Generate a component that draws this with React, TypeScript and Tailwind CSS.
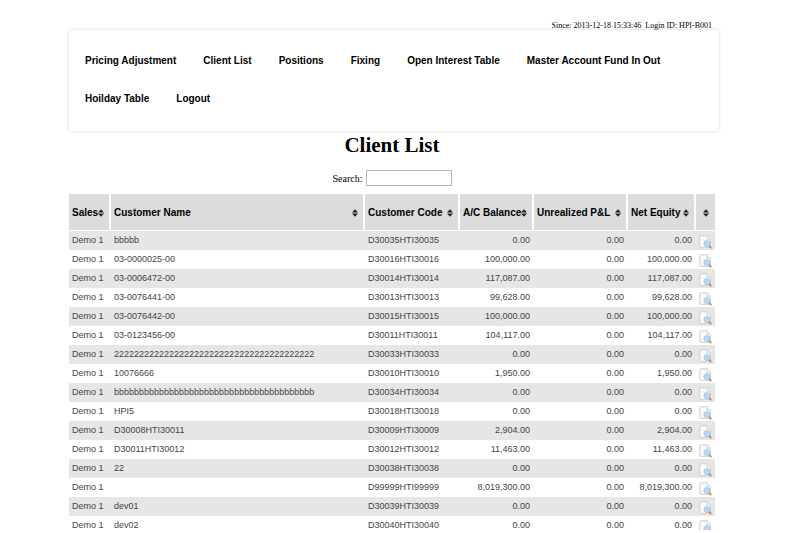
import type { ReactNode } from 'react';

interface Client {
  name: string;
  code: string;
  balance: string;
  equity: string;
}

const navItems = [
  'Pricing Adjustment',
  'Client List',
  'Positions',
  'Fixing',
  'Open Interest Table',
  'Master Account Fund In Out',
  'Hoilday Table',
  'Logout',
];

const clients: Client[] = [
  { name: 'bbbbb', code: 'D30035HTI30035', balance: '0.00', equity: '0.00' },
  { name: '03-0000025-00', code: 'D30016HTI30016', balance: '100,000.00', equity: '100,000.00' },
  { name: '03-0006472-00', code: 'D30014HTI30014', balance: '117,087.00', equity: '117,087.00' },
  { name: '03-0076441-00', code: 'D30013HTI30013', balance: '99,628.00', equity: '99,628.00' },
  { name: '03-0076442-00', code: 'D30015HTI30015', balance: '100,000.00', equity: '100,000.00' },
  { name: '03-0123456-00', code: 'D30011HTI30011', balance: '104,117.00', equity: '104,117.00' },
  { name: '2222222222222222222222222222222222222222', code: 'D30033HTI30033', balance: '0.00', equity: '0.00' },
  { name: '10076666', code: 'D30010HTI30010', balance: '1,950.00', equity: '1,950.00' },
  { name: 'bbbbbbbbbbbbbbbbbbbbbbbbbbbbbbbbbbbbbbbb', code: 'D30034HTI30034', balance: '0.00', equity: '0.00' },
  { name: 'HPI5', code: 'D30018HTI30018', balance: '0.00', equity: '0.00' },
  { name: 'D30008HTI30011', code: 'D30009HTI30009', balance: '2,904.00', equity: '2,904.00' },
  { name: 'D30011HTI30012', code: 'D30012HTI30012', balance: '11,463.00', equity: '11,463.00' },
  { name: '22', code: 'D30038HTI30038', balance: '0.00', equity: '0.00' },
  { name: '', code: 'D99999HTI99999', balance: '8,019,300.00', equity: '8,019,300.00' },
  { name: 'dev01', code: 'D30039HTI30039', balance: '0.00', equity: '0.00' },
  { name: 'dev02', code: 'D30040HTI30040', balance: '0.00', equity: '0.00' },
];

function SortIcon() {
  return (
    <svg viewBox="0 0 6 8" className="h-2 w-1.5 shrink-0" fill="#222" aria-hidden="true">
      <path d="M3 .2 6 3.6H0Z M0 4.4H6L3 7.8Z" />
    </svg>
  );
}

function ViewIcon() {
  return (
    <svg viewBox="0 0 13 14" className="h-3.5 w-[13px]" aria-hidden="true">
      <path d="M2 .8H8L11.5 4.2V12.4H2Q.8 12.4.8 11.2V2Q.8.8 2 .8Z" fill="#fafafa" stroke="#cbcbcb" strokeWidth=".9" />
      <path d="M8 .8V4.2H11.5" fill="#eee" stroke="#d2d2d2" strokeWidth=".8" />
      <path d="M10.2 10.9 11.8 12.6" stroke="#c98a50" strokeWidth="1.8" strokeLinecap="round" />
      <circle cx="7.9" cy="8.6" r="3" fill="#b9d8f6" stroke="#a3c0e2" strokeWidth=".8" />
    </svg>
  );
}

function HeaderCell({ children, last }: { children?: ReactNode; last?: boolean }) {
  return (
    <th
      scope="col"
      className={`h-[37px] border-b border-white bg-[#dcdcdc] p-0 pt-px text-left font-bold ${last ? '' : 'border-r-2'}`}
    >
      <button
        type="button"
        aria-label={last ? 'Sort by details' : undefined}
        className={`flex w-full items-center whitespace-nowrap ${last ? 'justify-center' : 'justify-between pl-[3px] pr-[5px]'}`}
      >
        {children}
        <SortIcon />
      </button>
    </th>
  );
}

export default function App() {
  return (
    <div className="h-screen bg-white pb-[3px] font-['Liberation_Sans',Arial,sans-serif] text-black">
      <div className="h-full overflow-hidden pl-[69px] pr-[81px] pt-[22px]">
        <p className="pr-[7px] text-right font-['Liberation_Serif',serif] text-[8px] leading-2 whitespace-pre">
          Since: 2013-12-18 15:33:46  Login ID: HPI-B001
        </p>
        <nav className="rounded-xs bg-white px-4 pt-3 pb-[13px] shadow-[0_0_3px_rgba(0,0,0,0.18)]">
          <ul className="flex flex-wrap gap-x-[27px]">
            {navItems.map((item) => (
              <li key={item}>
                <a href="#" className="block text-[10px] leading-[38px] font-bold whitespace-nowrap">
                  {item}
                </a>
              </li>
            ))}
          </ul>
        </nav>

        <main className="pr-1">
          <h1 className="pt-0.5 text-center font-['Liberation_Serif',serif] text-[21px] leading-6 font-bold">
            Client List
          </h1>
          <div className="mt-[13px] mb-2 flex items-center justify-center gap-[3px] font-['Liberation_Serif',serif] text-[10px]">
            <label htmlFor="search">Search:</label>
            <input id="search" type="text" className="h-4 w-[86px] border border-[#b4b6bc] bg-white px-1" />
          </div>

          <table className="w-full table-fixed border-separate border-spacing-0 text-[9px]">
            <colgroup>
              <col className="w-[42px]" />
              <col />
              <col className="w-[95px]" />
              <col className="w-[74px]" />
              <col className="w-[94px]" />
              <col className="w-[68px]" />
              <col className="w-[19px]" />
            </colgroup>
            <thead className="text-[10px]">
              <tr>
                <HeaderCell>Sales</HeaderCell>
                <HeaderCell>Customer Name</HeaderCell>
                <HeaderCell>Customer Code</HeaderCell>
                <HeaderCell>A/C Balance</HeaderCell>
                <HeaderCell>Unrealized P&amp;L</HeaderCell>
                <HeaderCell>Net Equity</HeaderCell>
                <HeaderCell last />
              </tr>
            </thead>
            <tbody className="text-[#444]">
              {clients.map((client) => (
                <tr key={client.code} className="h-[19px] odd:bg-[#e6e6e6]">
                  <td className="p-0 pl-[3px]">Demo 1</td>
                  <td className="p-0 pl-[3px]">{client.name}</td>
                  <td className="p-0 pl-[3px]">{client.code}</td>
                  <td className="p-0 pr-1 text-right">{client.balance}</td>
                  <td className="p-0 pr-1 text-right">0.00</td>
                  <td className="p-0 pr-1 text-right">{client.equity}</td>
                  <td className="p-0">
                    <button type="button" aria-label={`View ${client.code}`} className="flex pt-0.5 pl-[3px]">
                      <ViewIcon />
                    </button>
                  </td>
                </tr>
              ))}
            </tbody>
          </table>
        </main>
      </div>
    </div>
  );
}
